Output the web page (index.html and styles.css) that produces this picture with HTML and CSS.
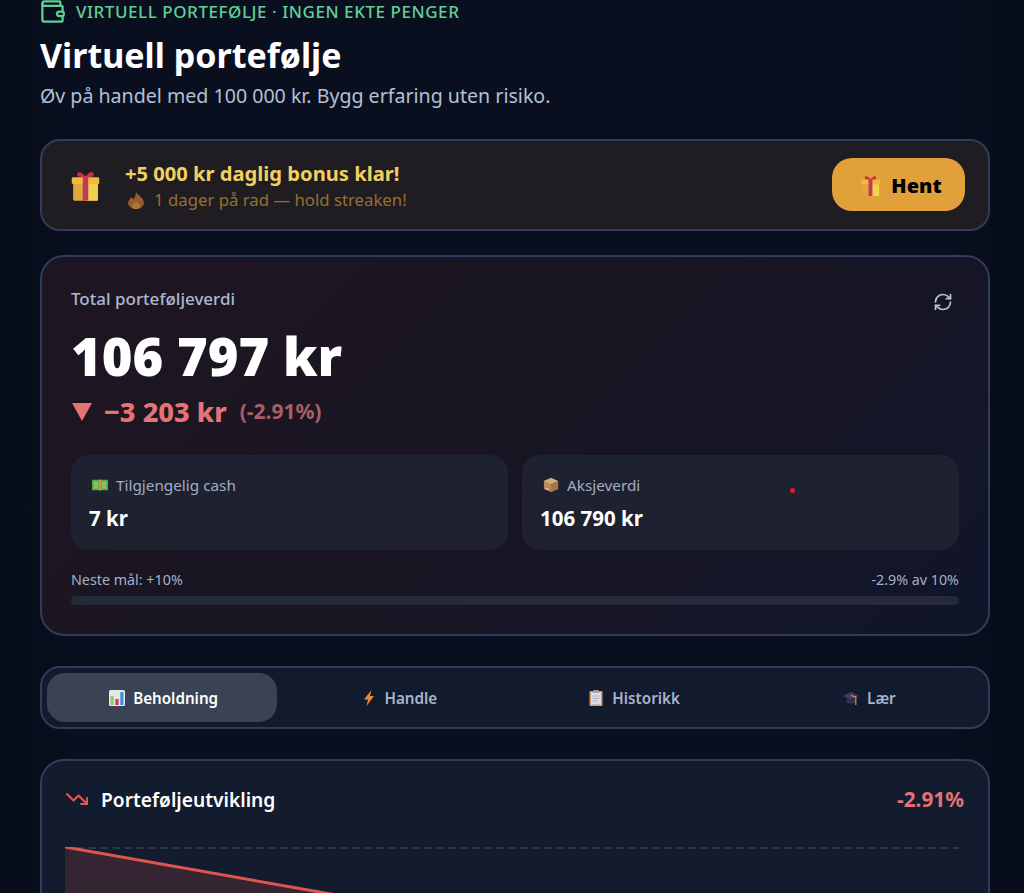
FILE: index.html
```html
<!DOCTYPE html>
<html lang="no">
<head>
    <meta charset="UTF-8">
    <meta name="viewport" content="width=device-width, initial-scale=1.0">
    <title>Virtuell portefølje</title>
    <link rel="stylesheet" href="styles.css">
</head>
<body>
    <div class="page">
        <header class="page-header">
            <div class="eyebrow">
                <svg class="eyebrow-icon" viewBox="0 0 24 24" fill="none" stroke="currentColor" stroke-width="2" stroke-linecap="round" stroke-linejoin="round"><path d="M19 7V4a1 1 0 0 0-1-1H5a2 2 0 0 0 0 4h15a1 1 0 0 1 1 1v4h-3a2 2 0 0 0 0 4h3a1 1 0 0 0 1-1v-2a1 1 0 0 0-1-1"/><path d="M3 5v14a2 2 0 0 0 2 2h15a1 1 0 0 0 1-1v-4"/></svg>
                <span>VIRTUELL PORTEFØLJE · INGEN EKTE PENGER</span>
            </div>
            <h1>Virtuell portefølje</h1>
            <p class="subtitle">Øv på handel med 100 000 kr. Bygg erfaring uten risiko.</p>
        </header>

        <section class="bonus-card">
            <svg class="bonus-gift" viewBox="0 0 24 24"><use href="#gift"/></svg>
            <div class="bonus-text">
                <div class="bonus-title">+5 000 kr daglig bonus klar!</div>
                <div class="bonus-streak">
                    <svg class="flame" viewBox="2 0 12 18" preserveAspectRatio="none"><path d="M8 0c1 3 6 6 6 12a6 6 0 0 1-12 0c0-3 2-4 2-7 1 1 2 2 2 3 1-2 2-5 2-8z" fill="#9a5a2c"/><path d="M8 10c1 2 3 3 3 5a3 3 0 0 1-6 0c0-2 2-3 3-5z" fill="#a87a38"/></svg>
                    <span>1 dager på rad — hold streaken!</span>
                </div>
            </div>
            <button class="bonus-btn">
                <svg class="btn-gift" viewBox="0 0 24 24"><use href="#gift"/></svg>
                Hent
            </button>
        </section>

        <section class="value-card">
            <div class="value-top">
                <span class="value-label">Total porteføljeverdi</span>
                <svg class="refresh" viewBox="0 0 24 24" fill="none" stroke="currentColor" stroke-width="2" stroke-linecap="round" stroke-linejoin="round"><path d="M3 12a9 9 0 0 1 9-9 9.75 9.75 0 0 1 6.74 2.74L21 8"/><path d="M21 3v5h-5"/><path d="M21 12a9 9 0 0 1-9 9 9.75 9.75 0 0 1-6.74-2.74L3 16"/><path d="M8 16H3v5"/></svg>
            </div>
            <div class="value-amount">106 797 kr</div>
            <div class="value-change">
                <svg class="arrow-down" viewBox="0 0 20 18"><polygon points="0,0 20,0 10,18"/></svg>
                <span class="change-amount">−3 203 kr</span>
                <span class="change-pct">(-2.91%)</span>
            </div>
            <div class="stats">
                <div class="stat">
                    <div class="stat-label">
                        <svg class="stat-icon" viewBox="0 0 18 14"><rect y="1" width="18" height="12" rx="1" fill="#5fa849"/><rect x="2" y="3" width="5" height="8" fill="#86c26c"/><rect x="11" y="3" width="5" height="8" fill="#86c26c"/><rect x="8" y="1" width="2.5" height="12" fill="#d9962f"/></svg>
                        Tilgjengelig cash
                    </div>
                    <div class="stat-value">7 kr</div>
                </div>
                <div class="stat">
                    <div class="stat-label">
                        <svg class="stat-icon" viewBox="0 0 18 18"><polygon points="9,1 17,4.5 17,13.5 9,17 1,13.5 1,4.5" fill="#b98a5c"/><polygon points="9,1 17,4.5 9,8 1,4.5" fill="#d8ae80"/><polygon points="9,8 17,4.5 17,13.5 9,17" fill="#a37649"/><polygon points="3,12 6,13.4 6,15 3,13.6" fill="#e8dccb"/></svg>
                        Aksjeverdi
                    </div>
                    <div class="stat-value">106 790 kr</div>
                    <span class="cursor-dot"></span>
                </div>
            </div>
            <div class="goal-row">
                <span>Neste mål: +10%</span>
                <span>-2.9% av 10%</span>
            </div>
            <div class="goal-bar"></div>
        </section>

        <nav class="tabs">
            <button class="tab active">
                <svg class="tab-icon" viewBox="0 0 16 16"><rect width="16" height="16" rx="1.5" fill="#e6e6ea"/><rect x="1.5" y="6" width="3.2" height="9" fill="#8ccf6a"/><rect x="6.4" y="9" width="3.2" height="6" fill="#d8365a"/><rect x="11.3" y="2" width="3.2" height="13" fill="#3f8fd8"/></svg>
                Beholdning
            </button>
            <button class="tab">
                <svg class="tab-icon" viewBox="0 0 16 16"><polygon points="10.500,0 3,9.500 7,9.500 5.500,16 13,6 9,6" fill="#e8873c"/></svg>
                Handle
            </button>
            <button class="tab">
                <svg class="tab-icon" viewBox="0 0 16 16"><rect x="1.5" y="1" width="13" height="15" rx="1" fill="#d69a63"/><rect x="3" y="2.5" width="10" height="12" fill="#dcdcec"/><rect x="5" y="0" width="6" height="2.5" rx="1" fill="#9a9aa8"/><path d="M4.5 6h7M4.5 8.5h7M4.5 11h5" stroke="#a8a8bc" stroke-width=".8"/></svg>
                Historikk
            </button>
            <button class="tab">
                <svg class="tab-icon" viewBox="0 0 16 16"><polygon points="8,2 16,6 8,10 0,6" fill="#453a5e"/><path d="M3.500 8.500v3.500c2 2 7 2 9 0V8.500L8 10.500z" fill="#3a3150"/><path d="M8 5.500l4.800 1.500v8" fill="none" stroke="#d9a050" stroke-width="1.100"/></svg>
                Lær
            </button>
        </nav>

        <section class="chart-card">
            <div class="chart-head">
                <div class="chart-title">
                    <svg class="trend" viewBox="0 0 24 24" fill="none" stroke="currentColor" stroke-width="2" stroke-linecap="round" stroke-linejoin="round"><polyline points="22 17 13.5 8.5 8.5 13.5 2 7"/><polyline points="16 17 22 17 22 11"/></svg>
                    Porteføljeutvikling
                </div>
                <span class="chart-pct">-2.91%</span>
            </div>
            <svg class="chart" viewBox="0 0 894 200">
                <line class="chart-base" x1="12" y1="1" x2="894" y2="1"/>
                <polygon class="chart-area" points="0,0 894,158 894,200 0,200"/>
                <line class="chart-line" x1="0" y1="0" x2="894" y2="158"/>
            </svg>
        </section>
    </div>

    <svg class="defs" width="0" height="0">
        <defs>
            <g id="gift">
                <path d="M12 6C10 2 6 1.500 6 3.800S9 6 12 6c3 0 6 .5 6-2.200S14 2 12 6z" fill="#c8323c"/>
                <rect x="3" y="10" width="18" height="13" rx="1" fill="#e0a63c"/>
                <rect x="12" y="10" width="9" height="13" fill="#f0d34c"/>
                <rect x="2" y="6" width="20" height="5" rx="1" fill="#f0b840"/>
                <rect x="10" y="5" width="4" height="18" fill="#c0385c"/>
            </g>
        </defs>
    </svg>
</body>
</html>
```

FILE: styles.css
```css
html, body {
    margin: 0;
    padding: 0;
    height: 100%;
    overflow: hidden;
}
body {
    font-family: "Noto Sans", "Open Sans", Arial, sans-serif;
    background: linear-gradient(90deg, #070c1b 0, #0a0f1f 8%, #0a0f1f 92%, #070c1b 100%);
    color: white;
}
button {
    font-family: inherit;
    border: none;
    cursor: pointer;
}
.defs {
    position: absolute;
}
.page {
    padding: 0 34px 0 40px;
}

/* header */
.page-header {
    height: 139px;
}
.eyebrow {
    display: flex;
    align-items: center;
    gap: 10px;
    height: 22px;
    color: #5fcf95;
    font-size: 17px;
    font-weight: 500;
    letter-spacing: 0.55px;
}
.eyebrow-icon {
    width: 27px;
    height: 27px;
    margin-left: -1px;
    flex-shrink: 0;
}
h1 {
    margin: 8px 0 0;
    font-size: 34px;
    line-height: 50px;
    font-weight: 700;
}
.subtitle {
    margin: 0;
    font-size: 19.600px;
    line-height: 32px;
    color: #b4c0d4;
}

/* daily bonus */
.bonus-card {
    display: flex;
    align-items: center;
    height: 92px;
    box-sizing: border-box;
    padding: 0 23px 0 29px;
    margin-bottom: 24px;
    background-color: #1f1d21;
    border: 2px solid #303c58;
    border-radius: 20px;
}
.bonus-gift {
    width: 33px;
    height: 33px;
    margin: 0 23px 0 -2px;
}
.bonus-text {
    flex: 1;
    padding-top: 3px;
}
.bonus-title {
    color: #f2d060;
    font-size: 20.150px;
    font-weight: 700;
    line-height: 27px;
}
.bonus-streak {
    display: flex;
    align-items: center;
    gap: 10px;
    color: #96702f;
    font-size: 16.750px;
    line-height: 26px;
}
.flame {
    width: 16px;
    height: 17px;
    margin-left: 3px;
}
.bonus-btn {
    display: flex;
    align-items: center;
    justify-content: center;
    gap: 9px;
    width: 133px;
    height: 53px;
    margin-top: -2px;
    padding: 2px 0 0 4px;
    background-color: #e2a03a;
    border-radius: 20px;
    color: black;
    font-size: 20px;
    font-weight: 900;
}
.btn-gift {
    width: 23px;
    height: 23px;
}

/* total value */
.value-card {
    box-sizing: border-box;
    height: 381px;
    padding: 29px;
    margin-bottom: 30px;
    background: linear-gradient(135deg, #1f1522 0, #1a1522 40%, #11152a 100%);
    border: 2px solid #303c58;
    border-radius: 24px;
}
.value-top {
    display: flex;
    justify-content: space-between;
    align-items: flex-start;
    height: 30px;
}
.value-label {
    color: #aab8d0;
    font-size: 17px;
    font-weight: 500;
    line-height: 26px;
}
.refresh {
    width: 20px;
    height: 20px;
    margin: 6px 6px 0 0;
    color: #b8c2d4;
}
.value-amount {
    font-size: 52.500px;
    font-weight: 900;
    line-height: 70px;
    margin-top: 5px;
}
.value-change {
    display: flex;
    align-items: center;
    height: 36px;
    margin-top: 2px;
    margin-bottom: 26px;
}
.arrow-down {
    width: 20px;
    height: 18px;
    fill: #e57373;
    margin: 2px 12px 0 1px;
}
.change-amount {
    color: #e57373;
    font-size: 27.200px;
    font-weight: 800;
    margin-right: 13px;
}
.change-pct {
    color: #a85f66;
    font-size: 21px;
    font-weight: 700;
}
.stats {
    display: grid;
    grid-template-columns: 1fr 1fr;
    gap: 14px;
}
.stat {
    position: relative;
    box-sizing: border-box;
    height: 95px;
    padding: 18px 18px 0;
    background-color: #1e2130;
    border-radius: 18px;
}
.stat-label {
    display: flex;
    align-items: center;
    gap: 8px;
    color: #a3adc2;
    font-size: 15.300px;
    line-height: 24px;
}
.stat-icon {
    width: 16px;
    height: 16px;
    margin-left: 3px;
}
.stat-value {
    font-size: 20.500px;
    font-weight: 700;
    line-height: 30px;
    margin-top: 6px;
}
.cursor-dot {
    position: absolute;
    left: 268px;
    top: 33px;
    width: 5px;
    height: 5px;
    border-radius: 50%;
    background-color: #e01b24;
}
.goal-row {
    display: flex;
    justify-content: space-between;
    margin-top: 19px;
    color: #a3b1c8;
    font-size: 14.300px;
    line-height: 21px;
}
.goal-bar {
    height: 9px;
    margin-top: 6px;
    background-color: #252a3a;
    border-radius: 5px;
}

/* tabs */
.tabs {
    display: grid;
    grid-template-columns: repeat(4, 1fr);
    gap: 5px;
    box-sizing: border-box;
    height: 63px;
    padding: 5px;
    margin-bottom: 30px;
    background-color: #121a2e;
    border: 2px solid #303c58;
    border-radius: 20px;
}
.tab {
    display: flex;
    align-items: center;
    justify-content: center;
    gap: 8px;
    padding: 0 0 0 3px;
    background: none;
    border-radius: 18px;
    color: #a8b4ca;
    font-size: 15.200px;
    font-weight: 600;
}
.tab.active {
    background-color: #3a4356;
    color: white;
}
.tab-icon {
    width: 16px;
    height: 16px;
}

/* chart */
.chart-card {
    box-sizing: border-box;
    height: 300px;
    padding: 23px;
    background-color: #131b2e;
    border: 2px solid #303c58;
    border-radius: 24px;
}
.chart-head {
    display: flex;
    justify-content: space-between;
    align-items: center;
    height: 30px;
    padding-right: 1px;
    margin-bottom: 33px;
}
.chart-title {
    display: flex;
    align-items: center;
    gap: 12px;
    font-size: 19.200px;
    font-weight: 600;
}
.trend {
    width: 24px;
    height: 24px;
    color: #e05a55;
}
.chart-pct {
    color: #e57373;
    font-size: 20.800px;
    font-weight: 700;
}
.chart {
    display: block;
    width: 894px;
    height: 200px;
}
.chart-base {
    stroke: #3a4356;
    stroke-width: 1.500;
    stroke-dasharray: 7 5;
}
.chart-area {
    fill: #352431;
}
.chart-line {
    stroke: #e0544e;
    stroke-width: 3;
}
```
